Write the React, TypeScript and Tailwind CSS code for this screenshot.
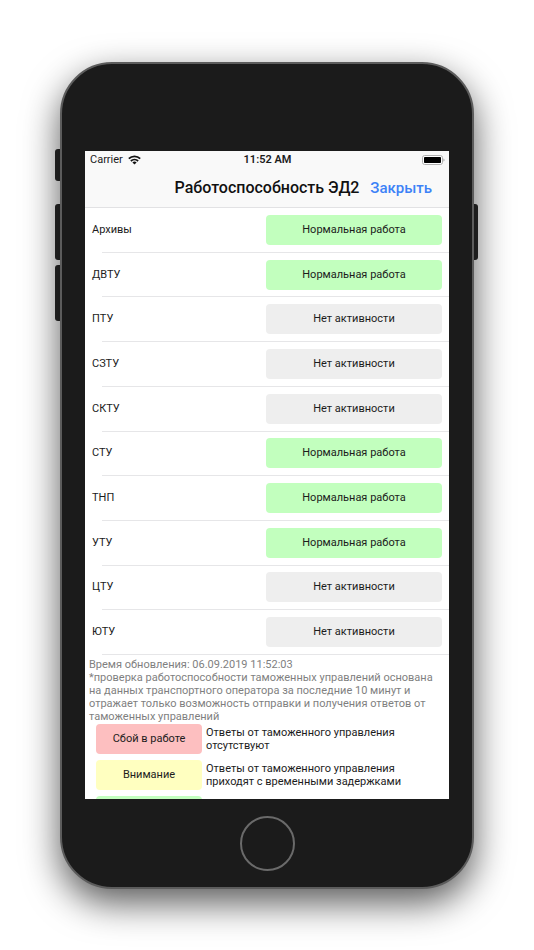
import clsx from 'clsx';

type Status = 'ok' | 'idle' | 'warning' | 'failure';

const STATUS_COLORS: Record<Status, string> = {
  ok: 'bg-[#c2ffbe]',
  idle: 'bg-[#eeeeee]',
  warning: 'bg-[#ffffc0]',
  failure: 'bg-[#fdbfc0]',
};

const departments: { name: string; status: Status; label: string }[] = [
  { name: 'Архивы', status: 'ok', label: 'Нормальная работа' },
  { name: 'ДВТУ', status: 'ok', label: 'Нормальная работа' },
  { name: 'ПТУ', status: 'idle', label: 'Нет активности' },
  { name: 'СЗТУ', status: 'idle', label: 'Нет активности' },
  { name: 'СКТУ', status: 'idle', label: 'Нет активности' },
  { name: 'СТУ', status: 'ok', label: 'Нормальная работа' },
  { name: 'ТНП', status: 'ok', label: 'Нормальная работа' },
  { name: 'УТУ', status: 'ok', label: 'Нормальная работа' },
  { name: 'ЦТУ', status: 'idle', label: 'Нет активности' },
  { name: 'ЮТУ', status: 'idle', label: 'Нет активности' },
];

const legend: { status: Status; label: string; lines: string[] }[] = [
  { status: 'failure', label: 'Сбой в работе', lines: ['Ответы от таможенного управления', 'отсутствуют'] },
  { status: 'warning', label: 'Внимание', lines: ['Ответы от таможенного управления', 'приходят с временными задержками'] },
  { status: 'ok', label: '', lines: [] },
];

function StatusPill({ status, label, className }: { status: Status; label: string; className?: string }) {
  return (
    <span
      className={clsx(
        'flex h-[30px] shrink-0 items-center justify-center rounded text-[11px] leading-[18px] text-[#1c1c1c]',
        STATUS_COLORS[status],
        className,
      )}
    >
      {label}
    </span>
  );
}

function StatusBar() {
  return (
    <div className="grid h-[18px] grid-cols-3 items-center pl-[5px] pr-1 text-[11px] leading-[18px] text-[#1c1c1c]">
      <div className="flex items-center gap-[5px]">
        <span>Carrier</span>
        <svg viewBox="0 0 13 10" className="h-[10px] w-[13px]" fill="none" stroke="#111" strokeWidth="1.8" aria-hidden="true">
          <path d="M0.8 3.7a8.2 8.2 0 0 1 11.4 0" />
          <path d="M2.9 6a5.2 5.2 0 0 1 7.2 0" />
          <path d="M6.5 9.6 4.4 7.5a3 3 0 0 1 4.2 0Z" fill="#111" stroke="none" />
        </svg>
      </div>
      <span className="text-center font-semibold">11:52 AM</span>
      <svg viewBox="0 0 24 10" className="h-[10px] w-6 justify-self-end" aria-hidden="true">
        <rect x="1.5" y="0.5" width="20" height="9" rx="2.2" fill="#fff" stroke="#b0b0b0" />
        <rect x="3" y="2" width="17" height="6" rx="0.8" fill="#000" />
        <path d="M22.5 3.5c1.3.5 1.3 2.5 0 3Z" fill="#999" />
      </svg>
    </div>
  );
}

function HardwareKey({ className }: { className: string }) {
  return <span className={clsx('absolute w-[7px] bg-[#292929]', className)} />;
}

export default function App() {
  return (
    <div className="bg-white px-[60px] pt-[62px] pb-[61px] font-['Roboto','Liberation_Sans',sans-serif]">
      <div className="relative">
        <HardwareKey className="-left-[5px] top-[87px] h-8 rounded-l-[3px]" />
        <HardwareKey className="-left-[5px] top-[142px] h-14 rounded-l-[3px]" />
        <HardwareKey className="-left-[5px] top-[203px] h-14 rounded-l-[3px]" />
        <HardwareKey className="-right-[4px] top-[142px] h-14 rounded-r-[3px]" />

        <div className="relative rounded-[52px] border-2 border-[#5c5c5c] bg-[#1b1b1b] px-[23px] pt-[87px] shadow-[0_14px_36px_rgba(0,0,0,0.65)]">
          <main className="h-[648px] overflow-hidden bg-white">
            <header className="h-[57px] border-b border-[#e2e2e4] bg-[#f9f9f9]">
              <StatusBar />
              <div className="grid h-[38px] grid-cols-[1fr_auto_1fr] items-center">
                <h1 className="col-start-2 whitespace-nowrap text-[16px] font-medium text-[#111]">
                  Работоспособность ЭД2
                </h1>
                <button type="button" className="justify-self-end pr-[17px] text-[15px] font-medium text-[#3d82f7]">
                  Закрыть
                </button>
              </div>
            </header>

            <ul className="flex h-[447px] flex-col">
              {departments.map((item) => (
                <li key={item.name} className="flex flex-1 flex-col">
                  <div className="flex flex-1 items-center justify-between px-[7px] text-[11px] leading-[18px] text-[#1c1c1c]">
                    <span>{item.name}</span>
                    <StatusPill status={item.status} label={item.label} className="w-44" />
                  </div>
                  <div className="ml-[17px] h-px bg-[#e6e6e8]" />
                </li>
              ))}
            </ul>

            <p className="whitespace-nowrap px-1 pt-[3px] text-[11px] leading-[13px] text-[#7f7f7f]">
              Время обновления: 06.09.2019 11:52:03
              <br />
              *проверка работоспособности таможенных управлений основана
              <br />
              на данных транспортного оператора за последние 10 минут и
              <br />
              отражает только возможность отправки и получения ответов от
              <br />
              таможенных управлений
            </p>

            <ul className="flex flex-col gap-[6px] pt-px pl-[11px]">
              {legend.map((item) => (
                <li key={item.status} className="flex items-center gap-1">
                  <StatusPill status={item.status} label={item.label} className="w-[106px]" />
                  <span className="whitespace-nowrap text-[11px] leading-[13px] text-[#1c1c1c]">
                    {item.lines.map((line) => (
                      <span key={line} className="block">
                        {line}
                      </span>
                    ))}
                  </span>
                </li>
              ))}
            </ul>
          </main>

          <div className="flex h-[88px] items-center justify-center">
            <button
              type="button"
              aria-label="Home"
              className="size-[55px] rounded-full border-2 border-[#6a6a6a]"
            />
          </div>
        </div>
      </div>
    </div>
  );
}
